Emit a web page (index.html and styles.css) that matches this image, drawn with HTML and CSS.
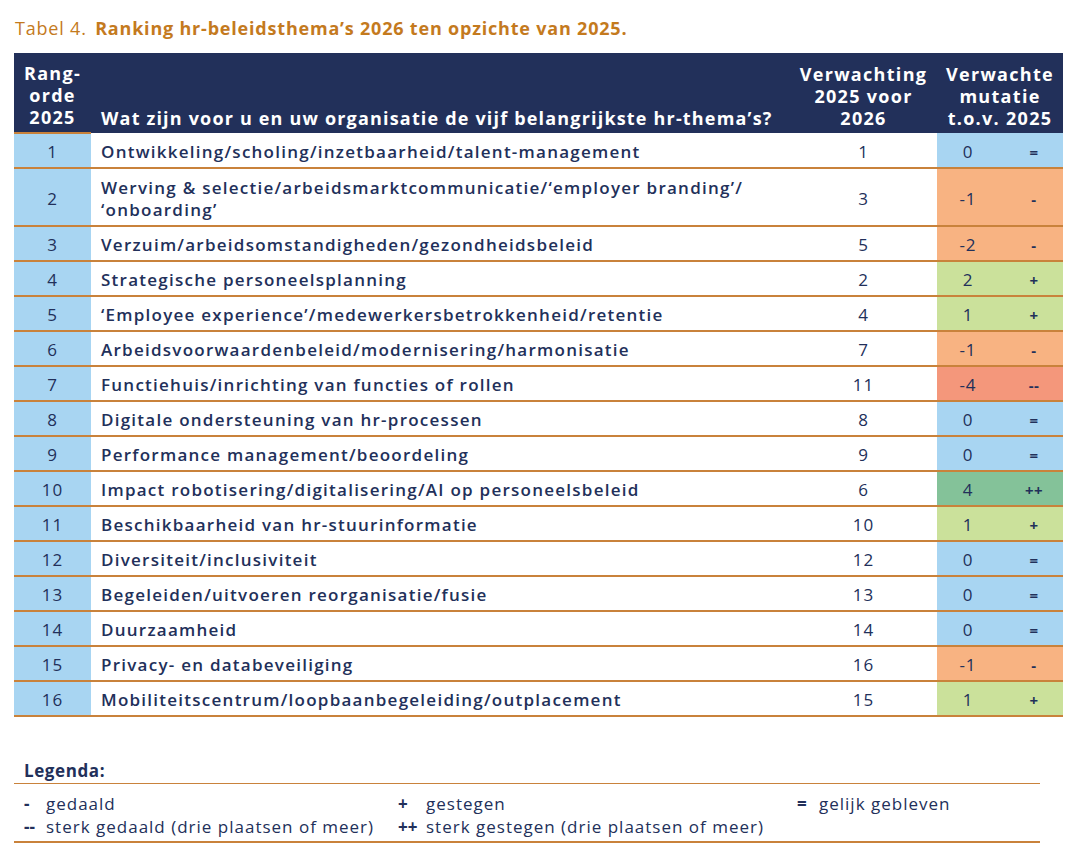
FILE: index.html
```html
<!DOCTYPE html>
<html lang="nl">
<head>
<meta charset="utf-8">
<link rel="stylesheet" href="styles.css">
</head>
<body>
<div class="page">
  <h1 class="caption"><span class="label">Tabel 4.</span> <b>Ranking hr-beleidsthema’s 2026 ten opzichte van 2025.</b></h1>
  <table class="ranking">
    <colgroup>
      <col class="c-rank"><col class="c-theme"><col class="c-exp"><col class="c-val"><col class="c-sym">
    </colgroup>
    <thead>
      <tr>
        <th class="rank">Rang-<br>orde<br>2025</th>
        <th class="theme">Wat zijn voor u en uw organisatie de vijf belangrijkste hr-thema’s?</th>
        <th class="exp">Verwachting<br>2025 voor<br>2026</th>
        <th class="mut" colspan="2">Verwachte<br>mutatie<br>t.o.v. 2025</th>
      </tr>
    </thead>
    <tbody>
      <tr><td class="rank">1</td><td class="theme">Ontwikkeling/scholing/inzetbaarheid/talent-management</td><td class="exp">1</td><td class="val eq">0</td><td class="sym eq">=</td></tr>
      <tr class="tall"><td class="rank">2</td><td class="theme">Werving &amp; selectie/arbeidsmarktcommunicatie/‘employer branding’/<br>‘onboarding’</td><td class="exp">3</td><td class="val dn">-1</td><td class="sym dn">-</td></tr>
      <tr><td class="rank">3</td><td class="theme">Verzuim/arbeidsomstandigheden/gezondheidsbeleid</td><td class="exp">5</td><td class="val dn">-2</td><td class="sym dn">-</td></tr>
      <tr><td class="rank">4</td><td class="theme">Strategische personeelsplanning</td><td class="exp">2</td><td class="val up">2</td><td class="sym up">+</td></tr>
      <tr><td class="rank">5</td><td class="theme">‘Employee experience’/medewerkersbetrokkenheid/retentie</td><td class="exp">4</td><td class="val up">1</td><td class="sym up">+</td></tr>
      <tr><td class="rank">6</td><td class="theme">Arbeidsvoorwaardenbeleid/modernisering/harmonisatie</td><td class="exp">7</td><td class="val dn">-1</td><td class="sym dn">-</td></tr>
      <tr><td class="rank">7</td><td class="theme">Functiehuis/inrichting van functies of rollen</td><td class="exp">11</td><td class="val dn2">-4</td><td class="sym dn2">--</td></tr>
      <tr><td class="rank">8</td><td class="theme">Digitale ondersteuning van hr-processen</td><td class="exp">8</td><td class="val eq">0</td><td class="sym eq">=</td></tr>
      <tr><td class="rank">9</td><td class="theme">Performance management/beoordeling</td><td class="exp">9</td><td class="val eq">0</td><td class="sym eq">=</td></tr>
      <tr><td class="rank">10</td><td class="theme">Impact robotisering/digitalisering/AI op personeelsbeleid</td><td class="exp">6</td><td class="val up2">4</td><td class="sym up2">++</td></tr>
      <tr><td class="rank">11</td><td class="theme">Beschikbaarheid van hr-stuurinformatie</td><td class="exp">10</td><td class="val up">1</td><td class="sym up">+</td></tr>
      <tr><td class="rank">12</td><td class="theme">Diversiteit/inclusiviteit</td><td class="exp">12</td><td class="val eq">0</td><td class="sym eq">=</td></tr>
      <tr><td class="rank">13</td><td class="theme">Begeleiden/uitvoeren reorganisatie/fusie</td><td class="exp">13</td><td class="val eq">0</td><td class="sym eq">=</td></tr>
      <tr><td class="rank">14</td><td class="theme">Duurzaamheid</td><td class="exp">14</td><td class="val eq">0</td><td class="sym eq">=</td></tr>
      <tr><td class="rank">15</td><td class="theme">Privacy- en databeveiliging</td><td class="exp">16</td><td class="val dn">-1</td><td class="sym dn">-</td></tr>
      <tr><td class="rank">16</td><td class="theme">Mobiliteitscentrum/loopbaanbegeleiding/outplacement</td><td class="exp">15</td><td class="val up">1</td><td class="sym up">+</td></tr>
    </tbody>
  </table>

  <section class="legend">
    <h2 class="legend-title">Legenda:</h2>
    <div class="legend-grid">
      <div class="legend-col">
        <div class="item"><span class="key">-</span><span>gedaald</span></div>
        <div class="item"><span class="key">--</span><span>sterk gedaald (drie plaatsen of meer)</span></div>
      </div>
      <div class="legend-col wide-key">
        <div class="item"><span class="key">+</span><span>gestegen</span></div>
        <div class="item"><span class="key">++</span><span>sterk gestegen (drie plaatsen of meer)</span></div>
      </div>
      <div class="legend-col">
        <div class="item"><span class="key">=</span><span>gelijk gebleven</span></div>
      </div>
    </div>
  </section>
</div>
</body>
</html>
```

FILE: styles.css
```css
* { box-sizing: border-box; }
html, body { margin: 0; padding: 0; background: #ffffff; }
body {
  font-family: "Open Sans", "Liberation Sans", sans-serif;
  color: #22305a;
}
.page {
  width: 1077px;
  padding: 16px 14px 0 14px;
}
.caption {
  margin: 0 0 0 1px;
  font-size: 18px;
  font-weight: 400;
  line-height: 24px;
  letter-spacing: 0.8px;
  color: #c47a1e;
  height: 37px;
}
.caption .label { margin-right: 3px; }
.caption b { font-weight: 700; }

.ranking {
  width: 1049px;
  border-collapse: collapse;
  table-layout: fixed;
  font-size: 17px;
}
.c-rank { width: 77px; }
.c-theme { width: 699px; }
.c-exp { width: 147px; }
.c-val { width: 62px; }
.c-sym { width: 64px; }

.ranking thead th {
  background: #22305a;
  color: #ffffff;
  font-weight: 700;
  font-size: 18px;
  letter-spacing: 1.3px;
  line-height: 22px;
  vertical-align: bottom;
  padding: 9px 2px 4px 2px;
  text-align: center;
  height: 80px;
}
.ranking thead th.theme { text-align: left; padding-left: 10px; letter-spacing: 1.18px; }

.ranking tbody tr { height: 35px; }
.ranking tbody tr.tall { height: 58px; }
.ranking tbody td {
  border-bottom: 2px solid #c9823b;
  padding: 3px 6px 0 6px;
  line-height: 22px;
  text-align: center;
  font-weight: 400;
  letter-spacing: 1px;
  vertical-align: middle;
}
.ranking tbody tr:first-child td.rank { border-top: 2px solid #c9823b; }
.ranking td.rank { background: #a8d5f2; }
.ranking td.theme { text-align: left; font-weight: 600; padding-left: 10px; letter-spacing: 1.25px; }
.ranking td.sym { font-weight: 700; font-size: 15px; letter-spacing: 0.5px; padding-left: 12px; }
.eq { background: #a8d5f2; }
.dn { background: #f8b382; }
.dn2 { background: #f4977b; }
.up { background: #cbe19b; }
.up2 { background: #84c299; }

.legend { width: 1026px; margin-top: 42px; }
.legend-title {
  margin: 0;
  padding-left: 10px;
  font-size: 17px;
  font-weight: 700;
  line-height: 24px;
  letter-spacing: 0.6px;
  padding-bottom: 0;
  border-bottom: 1px solid #c9823b;
}
.legend-grid {
  display: grid;
  grid-template-columns: 374px 399px 1fr;
  padding: 8px 0 3px 10px;
  border-bottom: 2px solid #c9823b;
}
.item { display: flex; font-size: 17px; line-height: 23px; letter-spacing: 1px; }
.key { width: 22px; font-weight: 700; flex: none; letter-spacing: 0; }
.wide-key .key { width: 28px; }
```
